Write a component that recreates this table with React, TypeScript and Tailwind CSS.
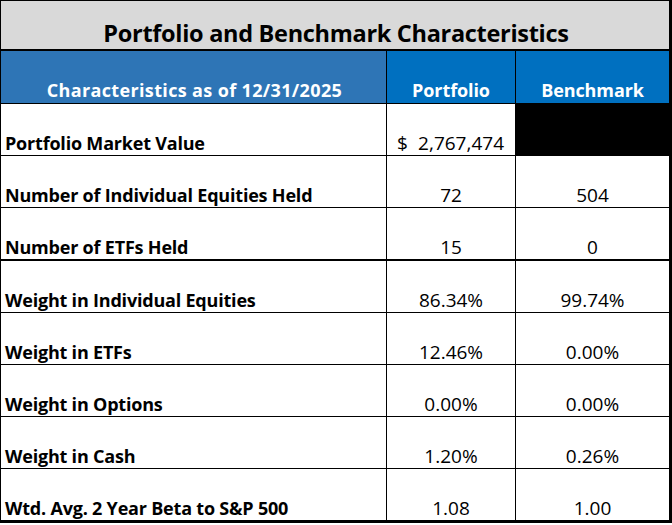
import React from 'react';

type Row = { label: string; portfolio: string; benchmark: string; thick?: boolean; money?: boolean; blackBench?: boolean };

const rows: Row[] = [
  { label: 'Portfolio Market Value', portfolio: '2,767,474', benchmark: '', money: true, blackBench: true },
  { label: 'Number of Individual Equities Held', portfolio: '72', benchmark: '504' },
  { label: 'Number of ETFs Held', portfolio: '15', benchmark: '0', thick: true },
  { label: 'Weight in Individual Equities', portfolio: '86.34%', benchmark: '99.74%' },
  { label: 'Weight in ETFs', portfolio: '12.46%', benchmark: '0.00%' },
  { label: 'Weight in Options', portfolio: '0.00%', benchmark: '0.00%' },
  { label: 'Weight in Cash', portfolio: '1.20%', benchmark: '0.26%' },
  { label: 'Wtd. Avg. 2 Year Beta to S&P 500', portfolio: '1.08', benchmark: '1.00' },
];

const App: React.FC = () => {
  return (
    <div className="w-[672px] h-[525px] bg-white font-['Open_Sans',sans-serif] text-black">
      <div className="w-[672px] border-l border-t border-r-[3px] border-b-[3px] border-black">
        <div className="h-[50px] bg-[#d9d9d9] flex items-end justify-center pb-[2px] pl-[2px] border-b-2 border-black">
          <span className="text-[23.5px] leading-[28px] font-bold tracking-[-0.3px]">Portfolio and Benchmark Characteristics</span>
        </div>

        <div className="grid grid-cols-[385px_1px_128px_1px_153px] h-[53px] border-b border-black text-white font-bold text-[18px] leading-[22px] tracking-[-0.1px]">
          <div className="bg-[#2e75b6] flex items-end justify-center pb-[2px] pl-[2px] tracking-[0.35px]">Characteristics as of 12/31/2025</div>
          <div className="bg-black" />
          <div className="bg-[#0070c0] flex items-end justify-center pb-[2px]">Portfolio</div>
          <div className="bg-black" />
          <div className="bg-[#0070c0] flex items-end justify-center pb-[2px]">Benchmark</div>
        </div>

        {rows.map((r, i) => (
          <div
            key={r.label}
            className={`grid grid-cols-[385px_1px_128px_1px_153px] leading-[22px] ${
              i === rows.length - 1 ? 'h-[51px]' : r.thick ? 'h-[53px] border-b-2 border-black' : 'h-[52px] border-b border-black'
            }`}
          >
            <div className="flex items-end pl-[4px] pb-[1px] font-bold text-[18px] tracking-[-0.2px]">{r.label}</div>
            <div className="bg-black" />
            {r.money ? (
              <div className="flex items-end justify-between pl-[10px] pr-[11px] pb-[1px] text-[19px]">
                <span>$</span>
                <span>{r.portfolio}</span>
              </div>
            ) : (
              <div className="flex items-end justify-center pb-[1px] text-[19px]">{r.portfolio}</div>
            )}
            <div className="bg-black" />
            {r.blackBench ? (
              <div className="bg-black" />
            ) : (
              <div className="flex items-end justify-center pb-[1px] text-[19px]">{r.benchmark}</div>
            )}
          </div>
        ))}
      </div>
    </div>
  );
};

export default App;
